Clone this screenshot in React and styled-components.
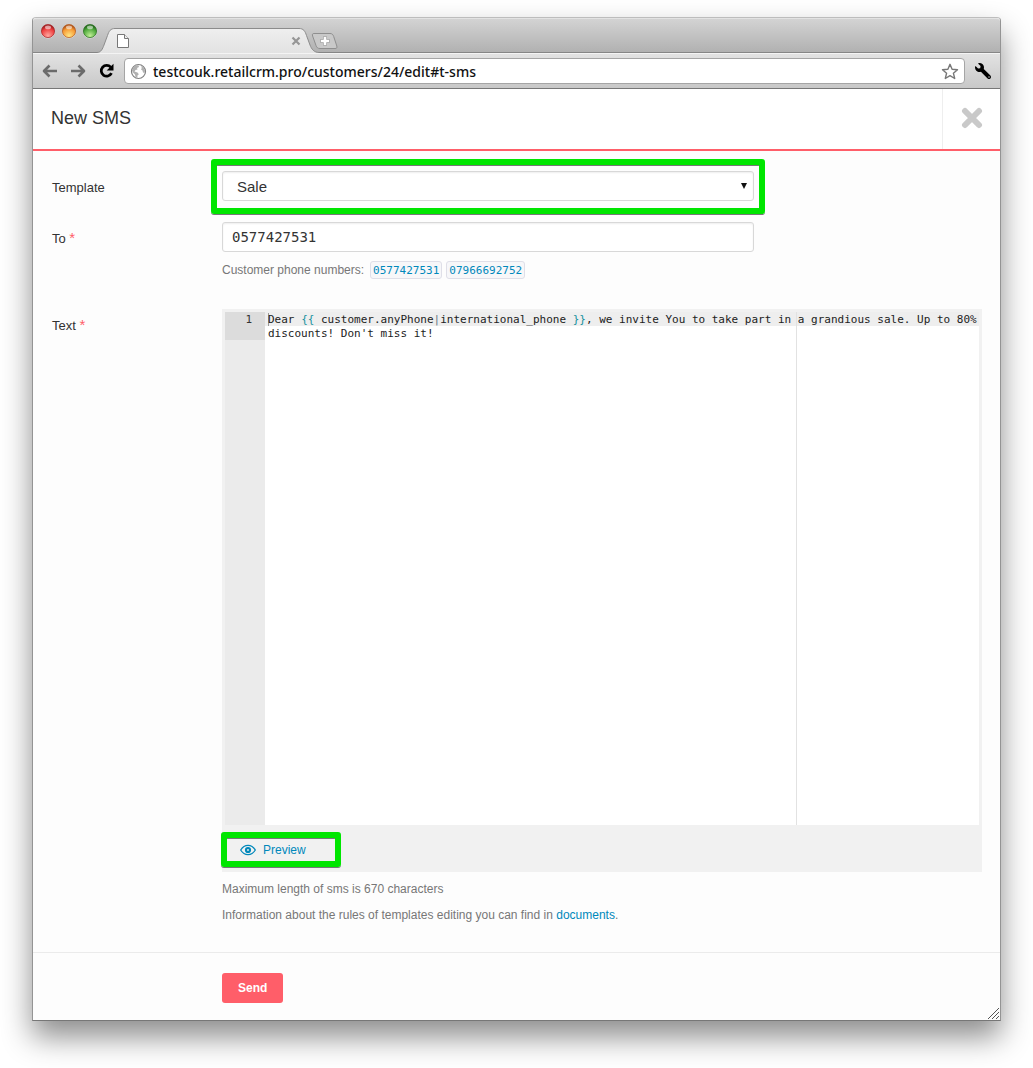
import React, { useState } from 'react';
import styled, { createGlobalStyle } from 'styled-components';
import { FaWrench } from 'react-icons/fa';

const GlobalStyle = createGlobalStyle`
  * {
    box-sizing: border-box;
  }
  body {
    margin: 0;
    background: #fff;
    font-family: "Liberation Sans", Arial, sans-serif;
    font-size: 12px;
    line-height: 18px;
    color: #333;
  }
  button, input, select, textarea {
    font-family: inherit;
    margin: 0;
  }
`;

const Page = styled.div`
  padding: 17px 32px 47px;
  overflow: hidden;
`;

const Window = styled.div`
  position: relative;
  background: #fdfdfd;
  border: 1px solid #949494;
  border-top-color: #bdbdbd;
  border-bottom-color: #777;
  border-radius: 4px 4px 0 0;
  box-shadow: 0 16px 30px rgba(0, 0, 0, 0.45);
`;

const TitleBar = styled.div`
  display: flex;
  align-items: flex-end;
  height: 35px;
  border-top: 1px solid #e3e3e3;
  border-radius: 3px 3px 0 0;
  background: linear-gradient(#d3d3d3, #b0b0b0);
  box-shadow: inset 0 -1px 0 #868686;
`;

const Lights = styled.div`
  display: flex;
  gap: 5px;
  align-self: flex-start;
  padding: 4px 0 0 7px;
`;

const Tab = styled.div`
  position: relative;
  z-index: 0;
  display: flex;
  align-items: center;
  justify-content: space-between;
  width: 222px;
  height: 25px;
  margin-left: -1px;
  padding: 0 18px 0 19px;
`;

const TabShape = styled.svg`
  position: absolute;
  z-index: -1;
  left: 0;
  top: 0;
`;

const TabClose = styled.button`
  display: flex;
  padding: 0;
  border: 0;
  background: none;
`;

const NewTab = styled.button`
  display: flex;
  align-self: flex-start;
  margin: 14px 0 0 -8px;
  padding: 0;
  border: 0;
  background: none;
`;

const Toolbar = styled.div`
  display: flex;
  align-items: center;
  height: 36px;
  padding: 0 9px;
  border-top: 1px solid #f4f4f4;
  border-bottom: 1px solid #777;
  background: linear-gradient(#e2e2e2, #c8c8c8);
`;

const ToolButton = styled.button`
  display: flex;
  padding: 0;
  margin-right: ${(p) => p.$space || 0}px;
  border: 0;
  background: none;
  color: #000;
`;

const Address = styled.label`
  display: flex;
  flex: 1;
  align-items: center;
  gap: 6px;
  height: 26px;
  margin-right: 10px;
  padding: 0 5px;
  background: #fff;
  border: 1px solid #a5a5a5;
  border-radius: 4px;
`;

const AddressInput = styled.input`
  flex: 1;
  min-width: 0;
  height: 22px;
  padding: 0;
  border: 0;
  outline: 0;
  background: none;
  color: #111;
  font: 500 14px "Noto Sans", sans-serif;
`;

const Header = styled.header`
  display: flex;
  align-items: stretch;
  justify-content: space-between;
  height: 62px;
  background: #fff;
  border-bottom: 2px solid #ff5e69;
`;

const Title = styled.h1`
  margin: 0;
  padding-left: 18px;
  font-size: 18px;
  font-weight: normal;
  line-height: 58px;
`;

const Close = styled.button`
  display: flex;
  align-items: center;
  justify-content: center;
  width: 58px;
  padding: 0 0 2px;
  border: 0;
  border-left: 1px solid #eee;
  background: none;
`;

const Form = styled.form`
  display: grid;
  grid-template-columns: 170px 1fr;
  padding: 20px 18px 28px 19px;
`;

const Label = styled.label`
  padding-top: 8px;
  font-size: 13px;
`;

const Required = styled.span`
  color: #ff5e69;
  font-size: 15px;
  line-height: 1;
`;

const Field = styled.div`
  min-width: 0;
  margin-bottom: ${(p) => p.$space || 0}px;
`;

const SelectBox = styled.div`
  position: relative;
  max-width: 532px;
  & > svg {
    position: absolute;
    right: 6px;
    top: 11px;
    pointer-events: none;
  }
`;

/* green frame drawn over the control it points to */
const Marker = styled.div`
  position: absolute;
  inset: ${(p) => p.$inset};
  border: 6px solid #00e600;
  border-radius: 3px;
  box-shadow: 0 1px 0 #777, inset 0 1px 0 #777;
  pointer-events: none;
`;

const Select = styled.select`
  display: block;
  width: 100%;
  height: 30px;
  padding: 0 14px;
  appearance: none;
  border: 1px solid #d8d8d8;
  border-radius: 3px;
  background: #fff;
  box-shadow: inset 0 1px 2px #eee;
  color: #333;
  font-size: 15px;
`;

const Input = styled.input`
  display: block;
  width: 100%;
  max-width: 532px;
  height: 30px;
  padding: 0 9px;
  border: 1px solid #d8d8d8;
  border-radius: 3px;
  background: #fff;
  box-shadow: inset 0 1px 2px #eee;
  color: #333;
  && {
    font: 14px "DejaVu Sans Mono", monospace;
  }
`;

const Phones = styled.div`
  display: flex;
  align-items: center;
  gap: 4px;
  margin-top: 9px;
  color: #777;
`;

const PhonesLabel = styled.span`
  margin-right: 2px;
`;

const Phone = styled.button`
  height: 18px;
  padding: 0 2px;
  border: 1px solid #dfdfe8;
  border-radius: 3px;
  background: #f7f7f9;
  color: #0088bb;
  && {
    font: 11px "DejaVu Sans Mono", monospace;
  }
`;

const Editor = styled.div`
  background: #f1f1f1;
  padding: 3px 3px 0;
`;

const EditorBody = styled.div`
  display: grid;
  grid-template-columns: 40px 1fr;
  height: 513px;
  background: #fff;
  font: 11px/14px "DejaVu Sans Mono", monospace;
`;

const Gutter = styled.div`
  background: #ebebeb;
  text-align: right;
`;

const LineNumber = styled.div`
  height: 28px;
  padding: 1px 13px 0 0;
  background: #dcdcdc;
`;

const CodeArea = styled.div`
  display: grid;
  background: linear-gradient(#e2e2e2, #e2e2e2) 531px 0 / 1px 100% no-repeat,
    linear-gradient(#eee, #eee) 0 0 / 100% 14px no-repeat;
  & > * {
    grid-area: 1 / 1;
    margin: 0;
    padding: 1px 0 0 3px;
    font: inherit;
    white-space: pre-wrap;
    overflow-wrap: break-word;
  }
`;

const Code = styled.pre`
  color: #222;
  &::before {
    content: "";
    float: left;
    width: 1px;
    height: 13px;
    margin-right: -1px;
    background: #999;
  }
`;

const Token = styled.span`
  color: ${(p) => (p.$pipe ? '#687687' : '#17929f')};
`;

const TextArea = styled.textarea`
  border: 0;
  outline: 0;
  resize: none;
  background: none;
  color: #222;
`;

const EditorFooter = styled.div`
  display: flex;
  align-items: center;
  height: 47px;
  padding: 2px 0 0 15px;
`;

const Preview = styled.button`
  position: relative;
  display: flex;
  align-items: center;
  gap: 7px;
  height: 18px;
  padding: 0;
  border: 0;
  background: none;
  color: #0088bb;
  font-size: 12px;
`;

const Hint = styled.p`
  margin: 8px 0 0;
  color: #777;
`;

const Link = styled.a`
  color: #0088bb;
  text-decoration: none;
`;

const Actions = styled.footer`
  padding: 20px 189px 17px;
  border-top: 1px solid #ebebeb;
`;

const Send = styled.button`
  height: 30px;
  padding: 0 16px;
  border: 0;
  border-radius: 3px;
  background: #ff5e69;
  color: #fff;
  font-size: 12px;
  font-weight: bold;
`;

const Grip = styled.svg`
  position: absolute;
  right: 1px;
  bottom: 1px;
`;

const Light = ({ id, dark, mid, light }) => (
  <svg width="16" height="16" viewBox="0 0 16 16">
    <defs>
      <radialGradient id={id} cx="50%" cy="85%" r="75%">
        <stop offset="0" stopColor={light} />
        <stop offset="0.7" stopColor={mid} />
        <stop offset="1" stopColor={dark} />
      </radialGradient>
    </defs>
    <circle cx="8" cy="8.6" r="7" fill="#fff" opacity="0.5" />
    <circle cx="8" cy="8" r="6.6" fill={`url(#${id})`} stroke={dark} strokeWidth="0.7" />
    <ellipse cx="8" cy="4.4" rx="3" ry="1.8" fill="#fff" opacity="0.55" />
  </svg>
);

const Arrow = ({ flip }) => (
  <svg width="16" height="16" viewBox="0 0 16 16">
    <path
      d={flip ? 'M1 8H14M8.5 2.5L14 8L8.5 13.5' : 'M15 8H2M7.5 2.5L2 8L7.5 13.5'}
      fill="none"
      stroke="#6b6b6b"
      strokeWidth="2.6"
      strokeLinejoin="round"
    />
  </svg>
);

const BrowserBar = () => (
  <>
    <TitleBar>
      <Lights>
        <Light id="red" dark="#a32022" mid="#ee4040" light="#ffa7a0" />
        <Light id="amber" dark="#b2561a" mid="#f79b35" light="#ffe583" />
        <Light id="green" dark="#256b1c" mid="#4fa93c" light="#c1f097" />
      </Lights>
      <Tab>
        <TabShape width="222" height="25" viewBox="0 0 222 25">
          <defs>
            <linearGradient id="tab" x1="0" y1="0" x2="0" y2="1">
              <stop offset="0" stopColor="#efefef" />
              <stop offset="1" stopColor="#e2e2e2" />
            </linearGradient>
          </defs>
          <path
            d="M0 24.5C4 24.5 5.5 21 7 17L10.5 7.5C12 3 13.5 0.5 18 0.5H202C206.5 0.5 208 3 209.5 7.5L213 17C214.5 21 217 24.5 222 24.5V25H0Z"
            fill="url(#tab)"
          />
          <path
            d="M0 24.5C4 24.5 5.5 21 7 17L10.5 7.5C12 3 13.5 0.5 18 0.5H202C206.5 0.5 208 3 209.5 7.5L213 17C214.5 21 217 24.5 222 24.5"
            fill="none"
            stroke="#8c8c8c"
          />
        </TabShape>
        <svg width="14" height="16" viewBox="0 0 14 16">
          <path d="M1.5 1.5H8.5L12.5 5.5V14.5H1.5Z" fill="#fff" stroke="#777" />
          <path d="M8.5 1.5V5.5H12.5" fill="#eee" stroke="#777" />
        </svg>
        <TabClose aria-label="Close tab">
          <svg width="10" height="10" viewBox="0 0 10 10">
            <path d="M1.5 1.5L8.5 8.5M8.5 1.5L1.5 8.5" stroke="#969696" strokeWidth="2.2" />
          </svg>
        </TabClose>
      </Tab>
      <NewTab aria-label="New tab">
        <svg width="28" height="17" viewBox="0 0 28 17">
          <path
            d="M3 0.5H19C21 0.5 22 1.5 22.7 3.5L25.8 13C26.3 14.8 25.8 15.5 24 15.5H9C6.8 15.5 5.7 14.5 5 12.5L1.6 3C1 1.3 1.5 0.5 3 0.5Z"
            fill="#c9c9c9"
            stroke="#8f8f8f"
          />
          <path d="M9.5 8H18.5M14 3.5V12.5" stroke="#9c9c9c" strokeWidth="4" />
          <path d="M10 8H18M14 4V12" stroke="#fff" strokeWidth="2.6" />
        </svg>
      </NewTab>
    </TitleBar>
    <Toolbar>
      <ToolButton aria-label="Back" $space={12}>
        <Arrow />
      </ToolButton>
      <ToolButton aria-label="Forward" $space={12}>
        <Arrow flip />
      </ToolButton>
      <ToolButton aria-label="Reload" $space={9}>
        <svg width="17" height="16" viewBox="0 0 17 16">
          <path d="M12.7 4.2A5.4 5.4 0 1 0 13.5 10.2" fill="none" stroke="#000" strokeWidth="2.7" />
          <path d="M15.5 0.8V7.6H8.7Z" fill="#000" />
        </svg>
      </ToolButton>
      <Address>
        <svg width="17" height="17" viewBox="0 0 17 17">
          <circle cx="8.5" cy="8.5" r="7" fill="#fff" stroke="#808080" strokeWidth="1.2" />
          <path
            d="M3 4.5L5.5 2.3L8.5 2.2L9 4L7 5L7.5 6.5L5.5 7L4.5 8.5L7.5 9.5L8.8 11.2L7.5 12.5L7.3 15L5.5 14L5 11.5L3 9.5L2 7.5Z"
            fill="#b0b0b0"
          />
          <path d="M11 3L13.5 4.5L15 7.5L14.5 10L13 9.5L12.5 7.5L11 6.5L11.8 5Z" fill="#b0b0b0" />
        </svg>
        <AddressInput aria-label="Address" defaultValue="testcouk.retailcrm.pro/customers/24/edit#t-sms" />
        <svg width="18" height="17" viewBox="0 0 18 17">
          <path
            d="M9 1.3L11.1 6.3L16.5 6.7L12.4 10.2L13.7 15.5L9 12.6L4.3 15.5L5.6 10.2L1.5 6.7L6.9 6.3Z"
            fill="#fff"
            stroke="#777"
            strokeWidth="1.4"
            strokeLinejoin="round"
          />
        </svg>
      </Address>
      <ToolButton aria-label="Settings">
        <FaWrench size={16} transform="scale(-1 1)" />
      </ToolButton>
    </Toolbar>
  </>
);

// splits the template into plain text, braces and filter pipes
const highlight = (text) =>
  text.split(/(\{\{|\}\}|\|)/).map((part, i) => {
    if (part === '{{' || part === '}}') return <Token key={i}>{part}</Token>;
    if (part === '|') return <Token key={i} $pipe>{part}</Token>;
    return part;
  });

const App = () => {
  const [phone, setPhone] = useState('0577427531');
  const [editing, setEditing] = useState(false);
  const [text, setText] = useState(
    "Dear {{ customer.anyPhone|international_phone }}, we invite You to take part in a grandious sale. Up to 80% discounts! Don't miss it!"
  );

  return (
    <Page>
      <GlobalStyle />
      <Window>
        <BrowserBar />
        <Header>
          <Title>New SMS</Title>
          <Close aria-label="Close">
            <svg width="22" height="22" viewBox="0 0 22 22">
              <path d="M4 4L18 18M18 4L4 18" stroke="#c9c9c9" strokeWidth="6" strokeLinecap="round" />
            </svg>
          </Close>
        </Header>
        <Form id="sms" onSubmit={(e) => e.preventDefault()}>
          <Label htmlFor="template">Template</Label>
          <Field $space={21}>
            <SelectBox>
              <Select id="template">
                <option>Sale</option>
              </Select>
              <svg width="8" height="8" viewBox="0 0 8 8">
                <path d="M1 1H7L4 7Z" fill="#111" />
              </svg>
              <Marker $inset="-12px -11px -13px" />
            </SelectBox>
          </Field>

          <Label htmlFor="to">
            To <Required>*</Required>
          </Label>
          <Field $space={30}>
            <Input id="to" value={phone} onChange={(e) => setPhone(e.target.value)} />
            <Phones>
              <PhonesLabel>Customer phone numbers:</PhonesLabel>
              {['0577427531', '07966692752'].map((n) => (
                <Phone key={n} type="button" onClick={() => setPhone(n)}>
                  {n}
                </Phone>
              ))}
            </Phones>
          </Field>

          <Label htmlFor="text">
            Text <Required>*</Required>
          </Label>
          <Field>
            <Editor>
              <EditorBody>
                <Gutter>
                  <LineNumber>1</LineNumber>
                </Gutter>
                <CodeArea>
                  {/* coloured code is shown until the field takes focus */}
                  {!editing && <Code>{highlight(text)}</Code>}
                  <TextArea
                    id="text"
                    spellCheck={false}
                    value={editing ? text : ''}
                    onFocus={() => setEditing(true)}
                    onBlur={() => setEditing(false)}
                    onChange={(e) => setText(e.target.value)}
                  />
                </CodeArea>
              </EditorBody>
              <EditorFooter>
                <Preview type="button">
                  <svg width="16" height="12" viewBox="0 0 16 12">
                    <path
                      d="M0.7 6C2.5 3 5 1.3 8 1.3S13.5 3 15.3 6C13.5 9 11 10.7 8 10.7S2.5 9 0.7 6Z"
                      fill="none"
                      stroke="#0088bb"
                      strokeWidth="1.3"
                    />
                    <circle cx="8" cy="6" r="2" fill="none" stroke="#0088bb" strokeWidth="2.2" />
                  </svg>
                  Preview
                  <Marker $inset="-9px -35px -8px -19px" />
                </Preview>
              </EditorFooter>
            </Editor>
            <Hint>Maximum length of sms is 670 characters</Hint>
            <Hint>
              Information about the rules of templates editing you can find in <Link href="#documents">documents</Link>.
            </Hint>
          </Field>
        </Form>
        <Actions>
          <Send type="submit" form="sms">
            Send
          </Send>
        </Actions>
        <Grip width="12" height="12" viewBox="0 0 12 12">
          <path d="M1 12L12 1M5 12L12 5M9 12L12 9" stroke="#555" />
        </Grip>
      </Window>
    </Page>
  );
};

export default App;
